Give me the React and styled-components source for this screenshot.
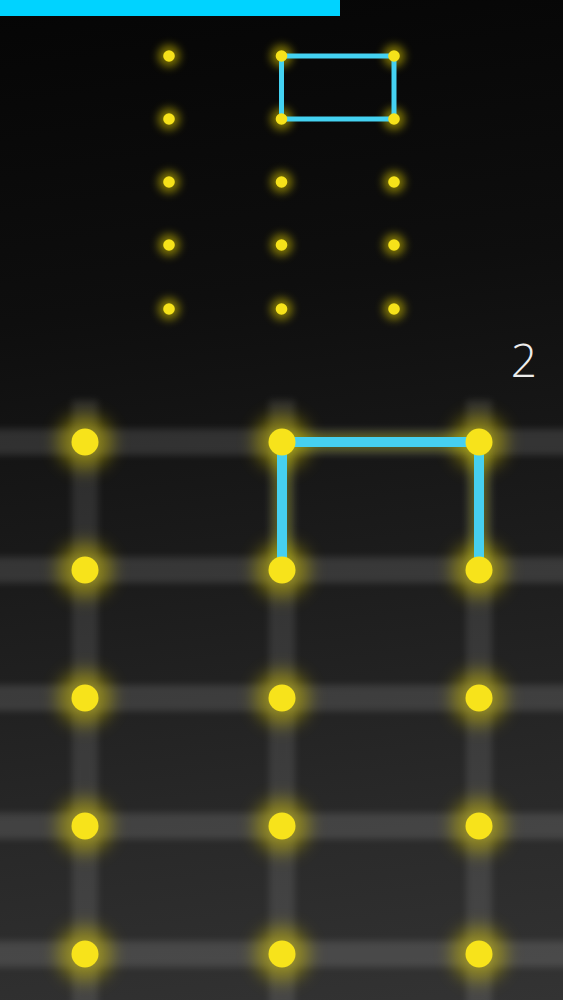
import React from "react";
import styled, { createGlobalStyle } from "styled-components";

const Global = createGlobalStyle`
  html, body { margin: 0; padding: 0; background: #0a0a0a; }
  body { font-family: "Open Sans", "Liberation Sans", sans-serif; }
`;

const Page = styled.div`
  width: 563px;
  height: 1000px;
  overflow: hidden;
  display: flex;
  flex-direction: column;
  background: linear-gradient(172deg, #050505 0%, #0e0e0e 30%, #1b1b1b 55%, #292929 80%, #333333 100%);
`;

const Progress = styled.div`
  height: 16px;
  width: ${(p) => p.$pct}%;
  background: #00d3ff;
  flex: none;
`;

const Target = styled.svg`
  display: block;
  width: 563px;
  height: 324px;
  flex: none;
`;

const LevelRow = styled.div`
  display: flex;
  justify-content: flex-end;
  height: 50px;
  padding-right: 26px;
  align-items: flex-start;
  flex: none;
`;

const Level = styled.span`
  font-family: "Open Sans", "Lato", sans-serif;
  font-weight: 300;
  font-size: 46px;
  line-height: 50px;
  color: #ececec;
  margin-top: -6px;
`;

const Board = styled.svg`
  display: block;
  width: 563px;
  height: 610px;
  flex: none;
`;

const tCols = [169, 281.5, 394];
const tRows = [40, 103, 166, 229, 293];
const bCols = [85, 282, 479];
const bRows = [52, 180, 308, 436, 564];

function TargetPattern() {
  const [a, b] = [tCols[1], tCols[2]];
  const [r0, r1] = [tRows[0], tRows[1]];
  return (
    <Target viewBox="0 0 563 324">
      <defs>
        <filter id="tg" x="-2" y="-2" width="5" height="5">
          <feGaussianBlur stdDeviation="4" />
        </filter>
      </defs>
      {tRows.map((y) =>
        tCols.map((x) => (
          <circle key={`g${x}-${y}`} cx={x} cy={y} r="11" fill="#e6d400" opacity="0.5" filter="url(#tg)" />
        ))
      )}
      <rect x={a} y={r0} width={b - a} height={r1 - r0} fill="none" stroke="#44d2f2" strokeWidth="5" />
      {tRows.map((y) =>
        tCols.map((x) => <circle key={`d${x}-${y}`} cx={x} cy={y} r="5.8" fill="#f6e21a" />)
      )}
    </Target>
  );
}

function BoardGrid() {
  const route = `M${bCols[1]} ${bRows[1]} L${bCols[1]} ${bRows[0]} L${bCols[2]} ${bRows[0]} L${bCols[2]} ${bRows[1]}`;
  return (
    <Board viewBox="0 0 563 610">
      <defs>
        <filter id="band" x="-0.1" y="-1" width="1.2" height="3">
          <feGaussianBlur stdDeviation="3.5" />
        </filter>
        <filter id="glow" x="-2" y="-2" width="5" height="5">
          <feGaussianBlur stdDeviation="9" />
        </filter>
        <filter id="lg" x="-1" y="-1" width="3" height="3">
          <feGaussianBlur stdDeviation="5" />
        </filter>
      </defs>
      <g filter="url(#band)" fill="#ffffff" opacity="0.12">
        {bRows.map((y) => (
          <rect key={`h${y}`} x="-20" y={y - 13} width="603" height="26" />
        ))}
      </g>
      <g filter="url(#band)" fill="#ffffff" opacity="0.1">
        {bCols.map((x) => (
          <rect key={`v${x}`} x={x - 13} y="10" width="26" height="620" />
        ))}
      </g>
      {bRows.map((y) =>
        bCols.map((x) => (
          <circle key={`g${x}-${y}`} cx={x} cy={y} r="27" fill="#d9c800" opacity="0.5" filter="url(#glow)" />
        ))
      )}
      <path d={route} fill="none" stroke="#c9d600" strokeWidth="16" opacity="0.3" filter="url(#lg)" />
      <path d={route} fill="none" stroke="#46d0ef" strokeWidth="10" />
      {bRows.map((y) =>
        bCols.map((x) => <circle key={`d${x}-${y}`} cx={x} cy={y} r="13.5" fill="#f7e31b" />)
      )}
    </Board>
  );
}

export default function App() {
  return (
    <>
      <Global />
      <Page>
        <Progress $pct={60.4} />
        <TargetPattern />
        <LevelRow>
          <Level>2</Level>
        </LevelRow>
        <BoardGrid />
      </Page>
    </>
  );
}
